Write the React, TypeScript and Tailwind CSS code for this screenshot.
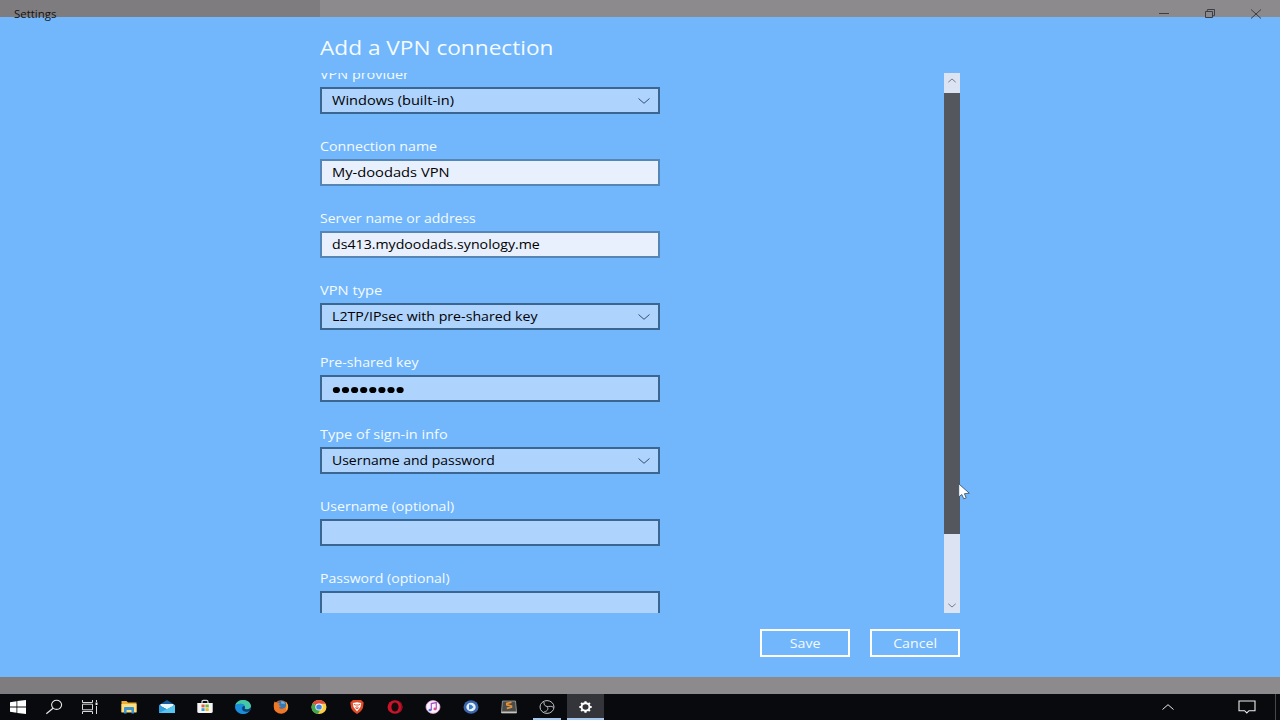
import React from 'react';

type FieldProps = {
  label: string;
  value?: string;
  kind?: 'select' | 'filled' | 'empty' | 'secret';
  stretch: string;
  valueStretch?: string;
};

const Chevron = ({ className }: { className?: string }) => (
  <svg viewBox="0 0 12 6" fill="none" stroke="currentColor" className={className}>
    <path d="M0.5 0.5 L6 5.3 L11.5 0.5" />
  </svg>
);

const Field: React.FC<FieldProps> = ({ label, value, kind = 'empty', stretch, valueStretch = '' }) => (
  <div className="h-[72px] shrink-0">
    <div className={`h-[22px] w-max origin-left text-[13px] leading-[19px] text-[#f4fbff] whitespace-nowrap ${stretch}`}>
      {label}
    </div>
    <div
      className={`flex h-[27px] w-[340px] items-center justify-between border-2 px-2.5 text-[13px] text-black ${
        kind === 'filled' ? 'border-[#5486b8] bg-[#e8f0fd]' : 'border-[#3c6692] bg-[#aed3fc]'
      }`}
    >
      {kind === 'secret' ? (
        <svg viewBox="0 0 73 8" className="mt-0.5 h-2 w-[73px]">
          {[...Array(8)].map((_, i) => (
            <ellipse key={i} cx={4.4 + i * 9.1} cy="4" rx="3.6" ry="3.1" />
          ))}
        </svg>
      ) : (
        <span className={`origin-left whitespace-nowrap leading-none ${valueStretch}`}>{value}</span>
      )}
      {kind === 'select' && <Chevron className="-mr-0.5 h-1.5 w-3 text-[#335273]" />}
    </div>
  </div>
);

const TitleBar = () => (
  <header className="relative z-10 flex h-[17px] justify-between">
    <span className="ml-3.5 origin-left pt-1.5 text-[11px] leading-4 text-[#141414] scale-x-[1.04]">Settings</span>
    <div className="flex gap-[34px] pr-[18px] pt-2 text-[#3c3e43]">
      <svg viewBox="0 0 12 12" className="h-3 w-3" fill="none" stroke="currentColor">
        <path d="M1 5.5H11" />
      </svg>
      <svg viewBox="0 0 12 12" className="h-3 w-3" fill="none" stroke="currentColor">
        <path d="M1.5 3.5H8.5V9.5H1.5ZM3 3.5L3.5 1.5H10.5V7.5L8.5 8" />
      </svg>
      <svg viewBox="0 0 12 12" className="h-3 w-3" fill="none" stroke="currentColor">
        <path d="M1 1.5L11 10.5M11 1.5L1 10.5" />
      </svg>
    </div>
  </header>
);

const ScrollBar = () => (
  <div className="flex w-4 flex-col items-center bg-[#dce4f3]">
    <div className="flex h-5 w-4 items-start justify-center pt-[5px]">
      <Chevron className="h-[5px] w-2 rotate-180 stroke-[1.3] text-[#666c77]" />
    </div>
    <div className="h-[441px] w-4 bg-[#54575d]" />
    <Chevron className="mt-auto mb-[5px] h-[5px] w-2 stroke-[1.3] text-[#666c77]" />
  </div>
);

const Icon = ({ children }: { children: React.ReactNode }) => (
  <svg viewBox="0 0 16 16" className="h-4 w-4 overflow-visible" fill="none">
    {children}
  </svg>
);

const systemIcons = [
  <Icon key="start">
    <path fill="#fff" d="M0 3.2L6.5 2.2V7.6H0ZM7.3 2.1L16 1V7.6H7.3ZM0 8.4H6.5V13.8L0 12.8ZM7.3 8.4H16V15L7.3 13.9Z" />
  </Icon>,
  <Icon key="search">
    <ellipse cx="10.6" cy="5.8" rx="5" ry="4.6" stroke="#e8e8e8" strokeWidth="1.1" />
    <path d="M7 9.3L0.3 14.7" stroke="#e8e8e8" strokeWidth="1.2" />
  </Icon>,
  <Icon key="tasks">
    <path d="M0.5 1V3.5H10.5V1M0.5 15V12.5H10.5V15M0.5 5.2H10.5V10.8H0.5ZM14.5 1V3M14.5 7V15" stroke="#d8d8d8" />
    <path d="M13.5 3.5H15.5V6H13.5Z" fill="#eee" />
  </Icon>,
];

const appIcons = [
  <Icon key="files">
    <path d="M0.5 2H5.5L7 3.5H15.5V13H0.5Z" fill="#e9ae35" />
    <path d="M0.5 5H15.5V13.5H0.5Z" fill="#ffdf7d" />
    <path d="M3 14.5V9Q3 8 4 8H12Q13 8 13 9V14.5H10.5V11H5.5V14.5Z" fill="#3992d2" />
  </Icon>,
  <Icon key="mail">
    <path d="M0 6L8 1L16 6V8H0Z" fill="#145c9d" />
    <path d="M1.5 5H14.5V7L8 10.5L1.5 7Z" fill="#eaf6ff" />
    <path d="M0 6L8 10.5L16 6V14H0Z" fill="#2f9ee0" />
    <path d="M0 14L16 6V14Z" fill="#54c5ef" />
  </Icon>,
  <Icon key="store">
    <path d="M5 5V3Q5 1.3 6.5 1.3H9.5Q11 1.3 11 3V5" stroke="#ddd" strokeWidth="1.2" />
    <path d="M0.3 4H15.7V12.5Q15.7 14 14 14H2Q0.3 14 0.3 12.5Z" fill="#f5f5f5" />
    <path d="M4.5 5.5H7.6V8.4H4.5Z" fill="#e65c3d" />
    <path d="M8.4 5.5H11.8V8.4H8.4Z" fill="#72b83e" />
    <path d="M4.5 9.2H7.6V12H4.5Z" fill="#34a0df" />
    <path d="M8.4 9.2H11.8V12H8.4Z" fill="#eebb2e" />
  </Icon>,
  <Icon key="edge">
    <ellipse cx="8" cy="8" rx="8" ry="7" fill="#1675c5" />
    <path d="M0.3 6.5C1.5 -0.5 14-1 16 6.5C16.5 10 12 11 9.5 9.8C11 8 9.5 5 6 4.8C3.5 4.7 1.3 5.5 0.3 6.5Z" fill="#45c8a5" />
    <path d="M0.2 7C3 3.5 9.5 4.5 9.8 7.5C7.5 6.5 6 8.5 7 11C8 13 11 13.6 14.7 12C11 16 5 15.5 2.5 12.5C1 11 0.1 9 0.2 7Z" fill="#198fdb" />
    <path d="M9.5 9.8C12 11.2 16 10 16 7.5V10L14.7 12C10 13.6 7 12 7.2 9C7.5 7.5 9 7 9.8 7.5C10 8.5 9.7 9 9.5 9.8Z" fill="#0b3f73" />
  </Icon>,
  <Icon key="firefox">
    <ellipse cx="8" cy="8" rx="7.2" ry="6.8" fill="#e86324" />
    <ellipse cx="8.4" cy="6.3" rx="5" ry="4.6" fill="#3579b5" />
    <path d="M1.6 2.5L3.5 4L7 4.3L5.7 6L8 7.5L5.8 8.5C7.5 11 11 9.5 12.5 8C14 6 13.5 3.5 12.5 2.4C16.2 5.5 15.7 10 13 12.5C9.5 15.7 3 14.5 1.2 9.8C0.5 7 0.7 4 1.6 2.5Z" fill="#ed7828" />
    <path d="M8 2.5C10 2 12 3 12 5C11 4.5 10 4.5 8.5 5Z" fill="#6fb5dc" />
    <path d="M12.5 2.4C15 5 15.5 9 13 11.5C14 8 13.8 5 12.5 2.4Z" fill="#ffc93c" />
  </Icon>,
  <Icon key="chrome">
    <ellipse cx="8" cy="8" rx="7.5" ry="7" fill="#f9cf44" />
    <path d="M8 8L1.5 4.5C4-0.2 12-0.2 14.8 4.8H8Z" fill="#e24b3e" />
    <path d="M1.5 4.5L8 8L8.7 12L7 15C1 14.2-0.8 9 1.5 4.5Z" fill="#42a550" />
    <ellipse cx="8" cy="8" rx="3.7" ry="3.4" fill="#f4f4f4" />
    <ellipse cx="8" cy="8" rx="2.8" ry="2.6" fill="#4286e5" />
  </Icon>,
  <Icon key="brave">
    <path d="M4 1H12L14.7 3.5L14 8.5Q13 12 8 15Q3 12 2 8.5L1.3 3.5Z" fill="#e24a25" />
    <path d="M3.8 4L8 3.3L12.2 4L11.5 8L8 12.5L4.5 8Z" fill="#fff" />
    <path d="M4.8 5.3L7 6.2M11.2 5.3L9 6.2M8 5V9.5M6.2 8.5L8 9.8L9.8 8.5" stroke="#dc4b2c" strokeWidth="0.9" />
  </Icon>,
  <Icon key="opera">
    <ellipse cx="8" cy="8" rx="7.5" ry="6.8" fill="#c9142b" />
    <path d="M11 2C15 4.5 15 11.5 11 14C17 12.5 17 3.5 11 2Z" fill="#8f0d1f" />
    <ellipse cx="8" cy="8" rx="3.6" ry="4.6" fill="#16090b" />
  </Icon>,
  <Icon key="music">
    <ellipse cx="8" cy="8" rx="7" ry="6.4" fill="#f8f2fb" stroke="#e6a6d7" strokeWidth="0.8" />
    <path d="M6.3 11V4.6L11.3 3.6V9.8" stroke="#a64fc2" strokeWidth="1.2" />
    <ellipse cx="5.1" cy="11" rx="1.6" ry="1.3" fill="#5677e2" />
    <ellipse cx="10.1" cy="9.9" rx="1.6" ry="1.3" fill="#e2488c" />
  </Icon>,
  <Icon key="player">
    <ellipse cx="8" cy="8" rx="7.5" ry="6.8" fill="#3a67ae" />
    <ellipse cx="8" cy="8" rx="4.7" ry="4.3" fill="#e8f1fb" />
    <path d="M6 5.6Q8 5 10.5 7.9Q8.5 10.5 6 10.5Z" fill="#3b80c8" />
  </Icon>,
  <Icon key="editor">
    <path d="M1.5 2H14.5L15.5 12.5V14H0.5V12.5Z" fill="#4b4b4a" stroke="#a4a4a2" strokeWidth="0.8" />
    <path d="M0.5 12.5H15.5V14H0.5Z" fill="#c5c5c2" />
    <path d="M10.5 3.2L5.8 4.4V5.8L10.5 7V8.2L5.8 9.4" stroke="#e5943a" strokeWidth="1.6" />
  </Icon>,
  <Icon key="recorder">
    <ellipse cx="8" cy="8" rx="7" ry="6.4" stroke="#c5c5c5" strokeWidth="1" />
    <path d="M5 3C4.6 6.3 6.5 7.2 8.2 7.5C10 7.7 12.3 6.5 14.5 8.4M8.2 7.5C9.5 9.5 9 12.2 5.3 12.7" stroke="#bdbdbd" strokeWidth="1" />
  </Icon>,
  <Icon key="settings">
    <ellipse cx="7.5" cy="8" rx="4" ry="3.7" stroke="#fff" strokeWidth="2" />
    <path d="M7.5 2.2V4.3M7.5 11.7V13.8M1.3 8H3.3M11.7 8H13.7M3.1 4L4.5 5.3M10.5 10.7L11.9 12M11.9 4L10.5 5.3M4.5 10.7L3.1 12" stroke="#fff" strokeWidth="2.2" />
  </Icon>,
];

const TaskBar = () => (
  <footer className="flex h-[26px] bg-[#090a0d]">
    <div className="mr-0.5 flex">
      {systemIcons.map((icon) => (
        <div key={icon.key} className="flex w-9 items-center justify-center">{icon}</div>
      ))}
    </div>
    {appIcons.map((icon) => (
      <div
        key={icon.key}
        className={`flex flex-col items-center pt-[5px] ${
          icon.key === 'settings' ? 'ml-px w-[37px] bg-[#34353a]' : 'w-[38px]'
        }`}
      >
        {icon}
        {icon.key === 'recorder' && <div className="mt-auto h-0.5 w-7 shrink-0 bg-[#a6c8f0]" />}
        {icon.key === 'settings' && <div className="mt-auto h-0.5 w-full shrink-0 bg-[#a6c8f0]" />}
      </div>
    ))}
    <div className="ml-auto flex items-center">
      <Chevron className="mr-16 h-1.5 w-3 rotate-180 text-[#ececec]" />
      <svg viewBox="0 0 18 14" className="mr-[19px] h-3.5 w-[18px]" fill="none" stroke="#eee" strokeWidth="1.1">
        <path d="M1 1H17V10.7H11L8.8 13L6.6 10.7H1Z" />
      </svg>
      <div className="mr-1 h-full w-px bg-[#45474b]" />
    </div>
  </footer>
);

export default function App() {
  return (
    <div className="flex h-[720px] w-[1280px] flex-col overflow-hidden bg-[linear-gradient(to_right,#7e7c7e_320px,#8c8a8d_320px)] font-['Open_Sans','Noto_Sans',sans-serif]">
      <TitleBar />
      <main className="relative h-[660px] bg-[#72b6fb]">
        <div className="mx-auto flex w-[640px] flex-col">
          <h1 className="h-14 w-max origin-left pt-[17px] text-[20px] leading-7 text-[#f4fbff] scale-x-[1.132]">Add a VPN connection</h1>
          <div className="flex h-[539.5px] justify-between overflow-hidden">
            <div className="-mt-2 flex flex-col">
              <Field label="VPN provider" stretch="scale-x-[1.11]" kind="select" value="Windows (built-in)" valueStretch="scale-x-[1.12]" />
              <Field label="Connection name" stretch="scale-x-[1.093]" kind="filled" value="My-doodads VPN" valueStretch="scale-x-[1.13]" />
              <Field label="Server name or address" stretch="scale-x-[1.076]" kind="filled" value="ds413.mydoodads.synology.me" valueStretch="scale-x-[1.09]" />
              <Field label="VPN type" stretch="scale-x-[1.13]" kind="select" value="L2TP/IPsec with pre-shared key" valueStretch="scale-x-[1.09]" />
              <Field label="Pre-shared key" stretch="scale-x-[1.088]" kind="secret" />
              <Field label="Type of sign-in info" stretch="scale-x-[1.113]" kind="select" value="Username and password" valueStretch="scale-x-[1.075]" />
              <Field label="Username (optional)" stretch="scale-x-[1.083]" />
              <Field label="Password (optional)" stretch="scale-x-[1.083]" />
            </div>
            <ScrollBar />
          </div>
          <div className="mt-[16.5px] flex justify-end gap-5 text-[13px] text-[#f4fbff]">
            <button className="h-7 w-[90px] border-2 border-white leading-none">
              <span className="inline-block scale-x-[1.09]">Save</span>
            </button>
            <button className="h-7 w-[90px] border-2 border-white leading-none">
              <span className="inline-block scale-x-[1.09]">Cancel</span>
            </button>
          </div>
        </div>
        <svg viewBox="0 0 12 17" className="absolute left-[958px] top-[466px] h-[17px] w-3" fill="#fff" stroke="#34495f" strokeWidth="0.8">
          <path d="M0.7 0.8V14L3.8 11.5L5.8 15.8L8.2 14.9L6.4 10.7L11.3 10.2Z" />
        </svg>
      </main>
      <div className="h-[17px]" />
      <TaskBar />
    </div>
  );
}
